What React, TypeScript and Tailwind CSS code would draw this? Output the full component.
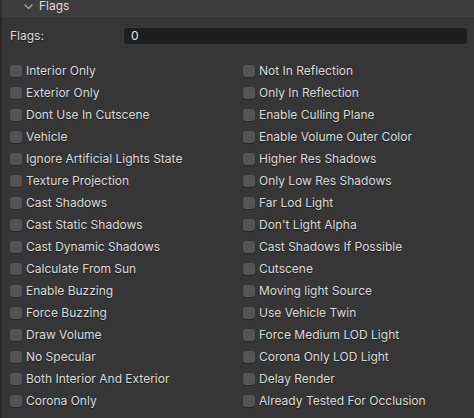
import React from 'react';

const leftFlags = [
    'Interior Only',
    'Exterior Only',
    'Dont Use In Cutscene',
    'Vehicle',
    'Ignore Artificial Lights State',
    'Texture Projection',
    'Cast Shadows',
    'Cast Static Shadows',
    'Cast Dynamic Shadows',
    'Calculate From Sun',
    'Enable Buzzing',
    'Force Buzzing',
    'Draw Volume',
    'No Specular',
    'Both Interior And Exterior',
    'Corona Only',
];

const rightFlags = [
    'Not In Reflection',
    'Only In Reflection',
    'Enable Culling Plane',
    'Enable Volume Outer Color',
    'Higher Res Shadows',
    'Only Low Res Shadows',
    'Far Lod Light',
    "Don't Light Alpha",
    'Cast Shadows If Possible',
    'Cutscene',
    'Moving light Source',
    'Use Vehicle Twin',
    'Force Medium LOD Light',
    'Corona Only LOD Light',
    'Delay Render',
    'Already Tested For Occlusion',
];

const Check = ({ label }: { label: string }) => (
    <div className="flex items-center h-[22px]">
        <div className="w-[12px] h-[12px] rounded-[3px] bg-[#545454] shadow-[0_1px_1px_rgba(0,0,0,0.35)]" />
        <span className="ml-[4px] text-[12px] leading-[12px] text-[#dcdcdc] [text-shadow:0_1px_1px_rgba(0,0,0,0.5)]">
            {label}
        </span>
    </div>
);

const App = () => {
    const rows = leftFlags.map((l, i) => [l, rightFlags[i]]);

    return (
        <div
            className="w-[474px] h-[418px] bg-[#363636] border-l-2 border-[#2b2b2b] overflow-hidden"
            style={{ fontFamily: 'Inter, "Noto Sans", sans-serif' }}
        >
            {/* panel header, scrolled partly out of view */}
            <div className="h-[17px] bg-[#3d3d3d] flex items-start pl-[22px]">
                <svg width="9" height="6" viewBox="0 0 9 6" className="mt-[4px]">
                    <path d="M1 1 L4.5 4.5 L8 1" stroke="#a8a8a8" strokeWidth="1.2" fill="none" strokeLinecap="round" strokeLinejoin="round" />
                </svg>
                <span className="ml-[6px] text-[12px] leading-[12px] text-[#dcdcdc]">Flags</span>
            </div>

            <div className="flex items-center pl-[8px] pr-[6px] pt-[10px]">
                <span className="w-[113px] text-[12px] leading-[12px] text-[#dcdcdc] [text-shadow:0_1px_1px_rgba(0,0,0,0.5)]">Flags:</span>
                <div className="flex-1 h-[18px] rounded-[4px] bg-[#1d1d1d] border border-[#3a3a3a] flex items-center pl-[7px]">
                    <span className="text-[12px] leading-[12px] text-[#e6e6e6]">0</span>
                </div>
            </div>

            <div className="grid grid-cols-[233px_1fr] pl-[8px] mt-[15px]">
                {rows.map(([l, r]) => (
                    <React.Fragment key={l}>
                        <Check label={l} />
                        <Check label={r} />
                    </React.Fragment>
                ))}
            </div>
        </div>
    );
};

export default App;
